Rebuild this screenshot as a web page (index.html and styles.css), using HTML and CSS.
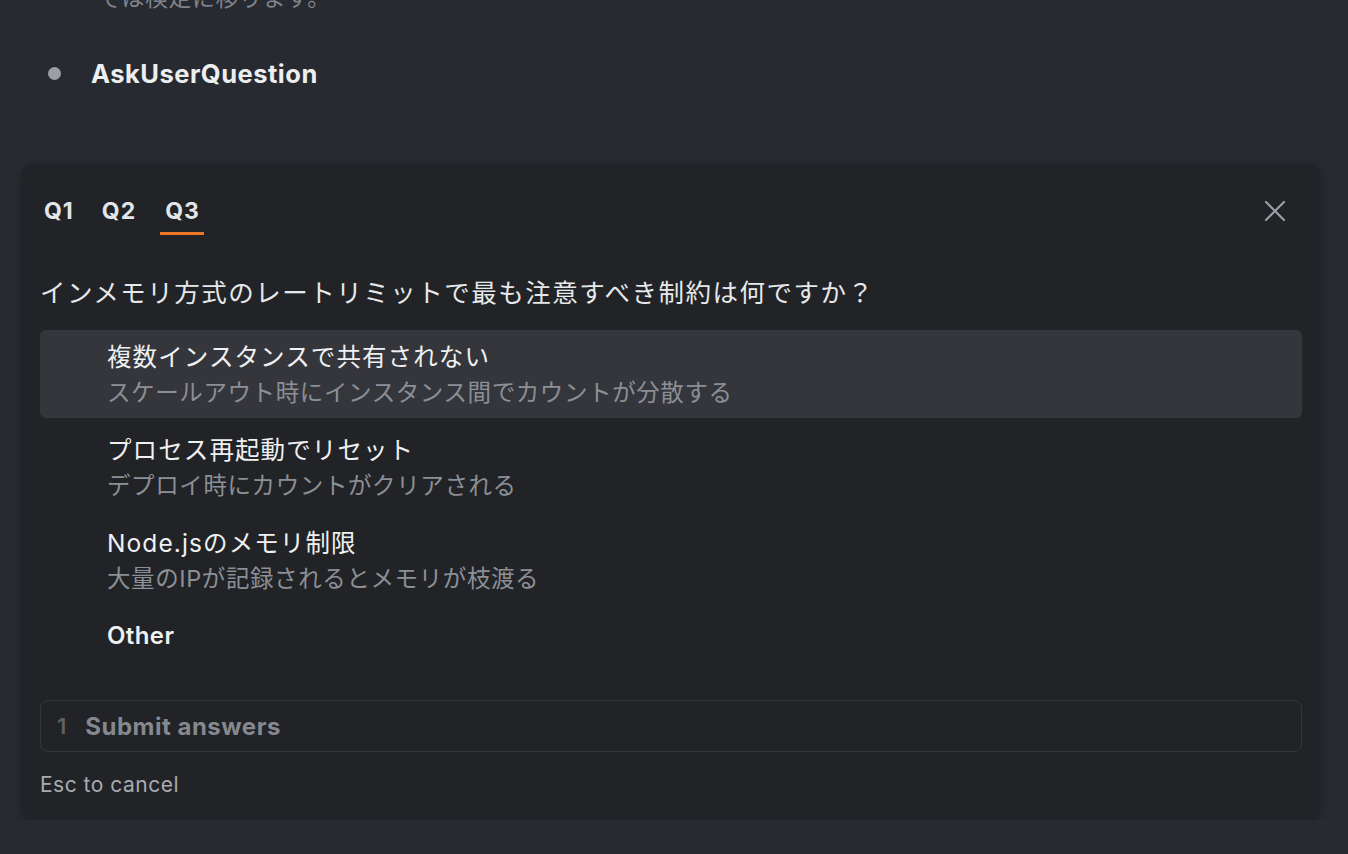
FILE: index.html
```html
<!DOCTYPE html>
<html lang="ja">
<head>
    <meta charset="UTF-8">
    <meta name="viewport" content="width=device-width, initial-scale=1.0">
    <title>AskUserQuestion</title>
    <link rel="stylesheet" href="styles.css">
</head>
<body>

    <p class="prev-text">では検定に移ります。</p>

    <div class="tool-line">
        <span class="tool-dot"></span>
        <span class="tool-name">AskUserQuestion</span>
    </div>

    <div class="question-panel">
        <div class="panel-head">
            <div class="tabs">
                <span class="tab">Q1</span>
                <span class="tab">Q2</span>
                <span class="tab active">Q3</span>
            </div>
            <button class="close-btn" aria-label="close">
                <svg width="22" height="22" viewBox="0 0 22 22">
                    <path d="M2 2 L20 20 M20 2 L2 20" stroke="#9a9ea5" stroke-width="2.2" stroke-linecap="round"/>
                </svg>
            </button>
        </div>

        <p class="question">インメモリ方式のレートリミットで最も注意すべき制約は何ですか？</p>

        <div class="options">
            <div class="option selected">
                <div class="option-title">複数インスタンスで共有されない</div>
                <div class="option-desc">スケールアウト時にインスタンス間でカウントが分散する</div>
            </div>
            <div class="option">
                <div class="option-title">プロセス再起動でリセット</div>
                <div class="option-desc">デプロイ時にカウントがクリアされる</div>
            </div>
            <div class="option">
                <div class="option-title">Node.jsのメモリ制限</div>
                <div class="option-desc">大量のIPが記録されるとメモリが枝渡る</div>
            </div>
            <div class="option">
                <div class="option-title other">Other</div>
            </div>
        </div>

        <div class="submit-box">
            <span class="submit-num">1</span>
            <span class="submit-label">Submit answers</span>
        </div>

        <p class="hint">Esc to cancel</p>
    </div>

</body>
</html>
```

FILE: styles.css
```css
body {
    margin: 0;
    background-color: #272a30;
    font-family: "Inter", "Noto Sans CJK JP", sans-serif;
    color: #e6e8ea;
    overflow: hidden;
}
.prev-text {
    margin: -20px 0 0 98px;
    font-size: 23px;
    line-height: 36px;
    letter-spacing: 0.5px;
    color: #80838a;
}
.tool-line {
    display: flex;
    align-items: center;
    margin-top: 39px;
    padding-left: 48px;
    height: 36px;
}
.tool-dot {
    width: 13px;
    height: 13px;
    border-radius: 50%;
    background: #9c9ea4;
    margin-right: 30px;
}
.tool-name {
    font-size: 25.5px;
    font-weight: 700;
    letter-spacing: 0.5px;
    color: #eceef0;
}
.question-panel {
    margin: 73px 28px 0 22px;
    padding: 33px 18px 21px 18px;
    background: #212327;
    border-radius: 12px;
    box-shadow: 0 2px 10px rgba(0, 0, 0, 0.25);
}
.panel-head {
    display: flex;
    justify-content: space-between;
    align-items: flex-start;
}
.tabs {
    display: flex;
    gap: 20px;
}
.tab {
    display: block;
    padding: 0 4px 7px 4px;
    border-bottom: 3px solid transparent;
    font-size: 23px;
    font-weight: 700;
    letter-spacing: 1px;
    line-height: 28px;
    color: #e3e5e8;
}
.tab.active {
    border-bottom-color: #ec7528;
    padding: 0 4px 7px 5px;
}
.close-btn {
    background: none;
    border: none;
    padding: 0;
    margin: 3px 16px 0 0;
    width: 22px;
    height: 22px;
    cursor: pointer;
}
.question {
    margin: 40px 0 19px 0;
    font-size: 25.5px;
    line-height: 36px;
    letter-spacing: 1.5px;
    color: #e6e8ea;
}
.options {
    display: flex;
    flex-direction: column;
    gap: 5px;
}
.option {
    padding: 9px 0 7px 67px;
    border-radius: 6px;
}
.option.selected {
    background: #34363b;
}
.option-title {
    font-size: 24.5px;
    line-height: 36px;
    letter-spacing: 1.1px;
    color: #eff0f2;
}
.option-title.other {
    font-weight: 600;
    font-size: 24px;
    letter-spacing: 0.4px;
}
.option-desc {
    font-size: 23.5px;
    line-height: 36px;
    letter-spacing: 0.6px;
    color: #8c8f95;
}
.submit-box {
    display: flex;
    align-items: center;
    box-sizing: border-box;
    margin-top: 39px;
    height: 52px;
    padding-left: 16px;
    border: 1.5px solid #33363b;
    border-radius: 8px;
}
.submit-num {
    font-size: 22px;
    font-weight: 600;
    color: #5e6166;
    margin-right: 19px;
}
.submit-label {
    font-size: 24px;
    font-weight: 700;
    letter-spacing: 0.5px;
    color: #85888e;
}
.hint {
    margin: 19px 0 0 0;
    font-size: 21px;
    line-height: 28px;
    letter-spacing: 0.5px;
    color: #a8abb0;
}
```
